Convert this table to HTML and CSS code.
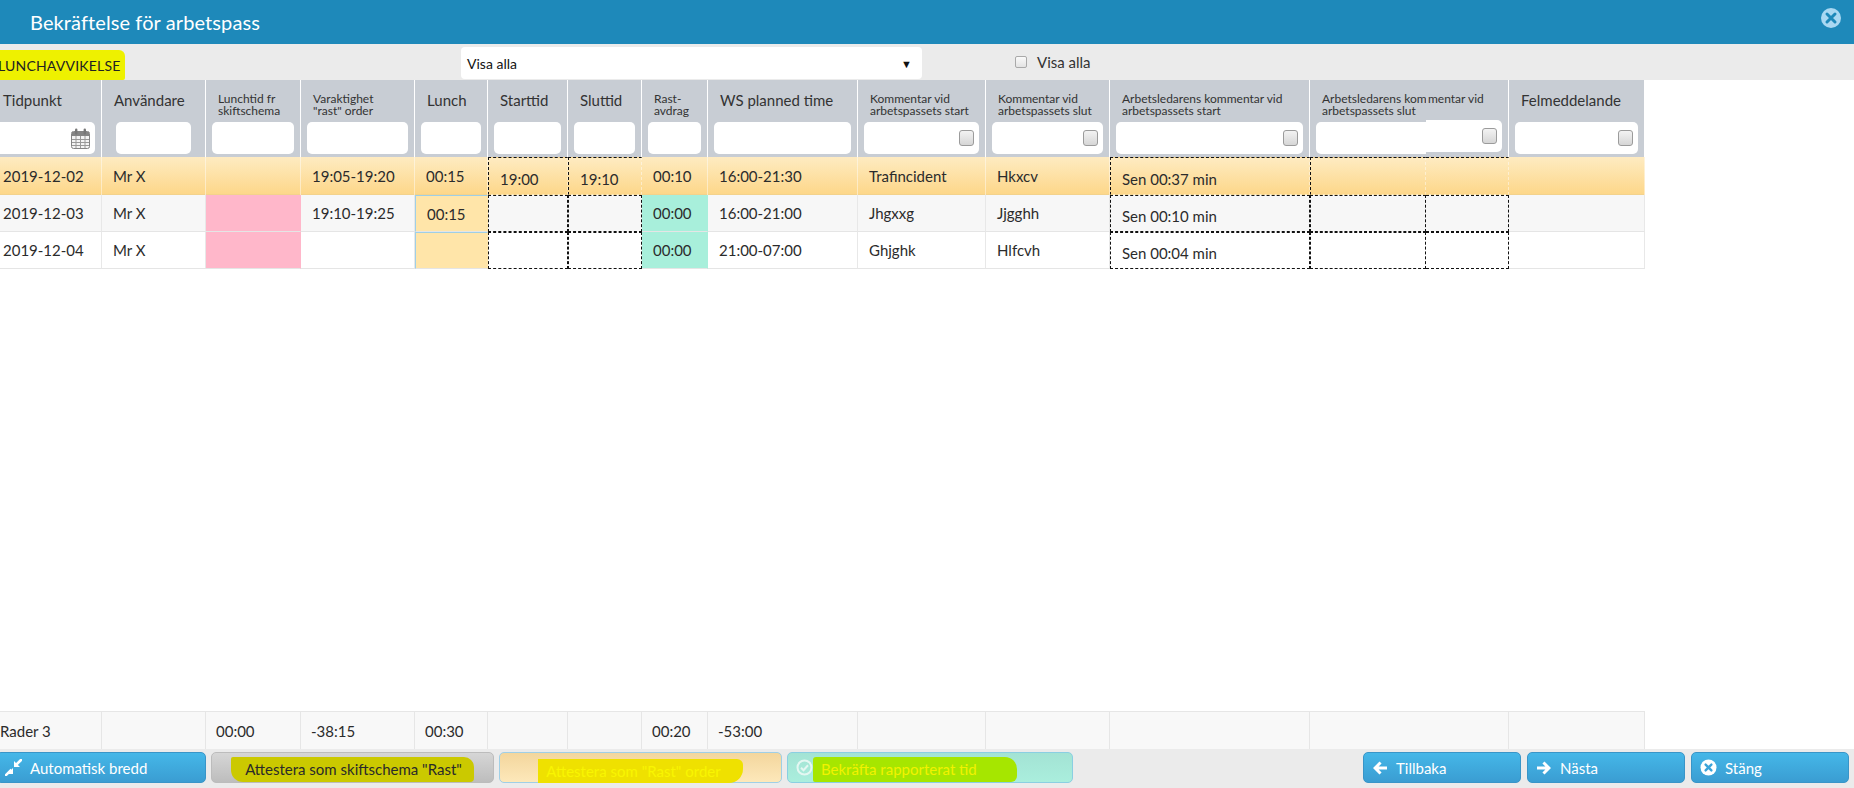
FILE: index.html
```html
<!DOCTYPE html>
<html lang="sv">
<head>
<meta charset="utf-8">
<title>Bekräftelse för arbetspass</title>
<link rel="stylesheet" href="styles.css">
</head>
<body>
<div class="app">
  <header class="titlebar">
    <h1 class="title">Bekräftelse för arbetspass</h1>
    <span class="close-x">
      <svg width="22" height="22" viewBox="0 0 22 22"><circle cx="11" cy="11" r="10" fill="#a9d8f2"/><path d="M7 7 L15 15 M15 7 L7 15" stroke="#1e89ba" stroke-width="3" stroke-linecap="round"/></svg>
    </span>
  </header>

  <div class="toolbar">
    <div class="tag-area"><span class="tag">LUNCHAVVIKELSE</span></div>
    <div class="select"><span>Visa alla</span><span class="caret">&#9660;</span></div>
    <label class="showall"><span class="cb-small"></span>Visa alla</label>
  </div>

  <main class="content">
    <table class="grid">
      <colgroup>
        <col class="c1"><col class="c2"><col class="c3"><col class="c4"><col class="c5"><col class="c6"><col class="c7"><col class="c8"><col class="c9"><col class="c10"><col class="c11"><col class="c12"><col class="c13"><col class="c14"><col class="c15">
      </colgroup>
      <thead>
        <tr>
          <th class="first"><div class="lbl">Tidpunkt</div><div class="flt date-flt"><svg width="19" height="21" viewBox="0 0 19 21"><rect x="0.5" y="3.5" width="18" height="17" rx="2" fill="#f4f4f4" stroke="#858585"/><rect x="1" y="4" width="17" height="4" fill="#858585"/><rect x="4" y="0.5" width="2.4" height="6" rx="1.2" fill="#777"/><rect x="12.6" y="0.5" width="2.4" height="6" rx="1.2" fill="#777"/><path d="M1 11.5 H18 M1 14.5 H18 M1 17.5 H18 M5 8 V20 M9.5 8 V20 M14 8 V20" stroke="#9a9a9a" stroke-width="1"/></svg></div></th>
          <th><div class="lbl">Användare</div><div class="flt flt-user"></div></th>
          <th><div class="lbl sm">Lunchtid fr<br>skiftschema</div><div class="flt"></div></th>
          <th><div class="lbl sm">Varaktighet<br>"rast" order</div><div class="flt"></div></th>
          <th><div class="lbl">Lunch</div><div class="flt"></div></th>
          <th><div class="lbl">Starttid</div><div class="flt"></div></th>
          <th><div class="lbl">Sluttid</div><div class="flt"></div></th>
          <th><div class="lbl sm">Rast-<br>avdrag</div><div class="flt"></div></th>
          <th><div class="lbl">WS planned time</div><div class="flt"></div></th>
          <th><div class="lbl sm">Kommentar vid<br>arbetspassets start</div><div class="flt"><span class="cb"></span></div></th>
          <th><div class="lbl sm">Kommentar vid<br>arbetspassets slut</div><div class="flt"><span class="cb"></span></div></th>
          <th><div class="lbl sm">Arbetsledarens kommentar vid<br>arbetspassets start</div><div class="flt"><span class="cb"></span></div></th>
          <th class="cut"><div class="lbl sm">Arbetsledarens kom<br>arbetspassets slut</div><div class="flt flt-cut"></div></th>
          <th class="tail"><div class="lbl sm lbl-tail">mentar vid</div><div class="flt flt-tail"><span class="cb"></span></div></th>
          <th><div class="lbl">Felmeddelande</div><div class="flt"><span class="cb"></span></div></th>
        </tr>
      </thead>
      <tbody>
        <tr class="sel">
          <td class="first">2019-12-02</td><td>Mr X</td><td></td><td>19:05-19:20</td><td>00:15</td>
          <td class="dash">19:00</td><td class="dash">19:10</td><td>00:10</td><td>16:00-21:30</td>
          <td>Trafincident</td><td>Hkxcv</td><td class="dash">Sen 00:37 min</td><td class="dash"></td><td class="dash tail"></td><td></td>
        </tr>
        <tr class="alt">
          <td class="first">2019-12-03</td><td>Mr X</td><td class="pink"></td><td>19:10-19:25</td><td class="peach">00:15</td>
          <td class="dash"></td><td class="dash"></td><td class="mint">00:00</td><td>16:00-21:00</td>
          <td>Jhgxxg</td><td>Jjgghh</td><td class="dash">Sen 00:10 min</td><td class="dash"></td><td class="dash tail"></td><td></td>
        </tr>
        <tr>
          <td class="first">2019-12-04</td><td>Mr X</td><td class="pink"></td><td></td><td class="peach"></td>
          <td class="dash"></td><td class="dash"></td><td class="mint">00:00</td><td>21:00-07:00</td>
          <td>Ghjghk</td><td>Hlfcvh</td><td class="dash">Sen 00:04 min</td><td class="dash"></td><td class="dash tail"></td><td></td>
        </tr>
      </tbody>
    </table>
  </main>

  <table class="grid summary">
    <colgroup>
      <col class="c1"><col class="c2"><col class="c3"><col class="c4"><col class="c5"><col class="c6"><col class="c7"><col class="c8"><col class="c9"><col class="c10"><col class="c11"><col class="c12"><col class="c13"><col class="c14"><col class="c15">
    </colgroup>
    <tbody>
      <tr>
        <td class="first">Rader 3</td><td></td><td>00:00</td><td>-38:15</td><td>00:30</td><td></td><td></td><td>00:20</td><td>-53:00</td><td></td><td></td><td></td><td colspan="2"></td><td></td>
      </tr>
    </tbody>
  </table>

  <footer class="footer">
    <div class="btn-group left">
      <button class="btn blue w-auto"><svg width="17" height="17" viewBox="0 0 17 17"><path d="M9 2 V8 H15 Z M8 9 V15 H2 Z" fill="#fff"/><path d="M11.5 5.5 L16 1 M5.5 11.5 L1 16" stroke="#fff" stroke-width="2.6" stroke-linecap="square"/></svg><span>Automatisk bredd</span></button>
      <button class="btn gray w-mid"><span class="hl hl-olive">Attestera som skiftschema "Rast"</span></button>
      <button class="btn peach w-mid"><span class="hl hl-yellow">Attestera som "Rast" order</span></button>
      <button class="btn teal w-conf"><svg width="17" height="17" viewBox="0 0 17 17"><circle cx="8.5" cy="8.5" r="7" fill="none" stroke="#e4f7f2" stroke-width="2"/><path d="M5 8.8 L7.5 11.2 L12 6.3" fill="none" stroke="#e4f7f2" stroke-width="2"/></svg><span class="hl hl-lime">Bekräfta rapporterat tid</span></button>
    </div>
    <div class="btn-group right">
      <button class="btn blue w-nav"><svg width="16" height="16" viewBox="0 0 16 16"><path d="M7.5 1.5 L1 8 L7.5 14.5 L9.6 12.4 L6.6 9.6 H15 V6.4 H6.6 L9.6 3.6 Z" fill="#fff"/></svg><span>Tillbaka</span></button>
      <button class="btn blue w-nav"><svg width="16" height="16" viewBox="0 0 16 16"><path d="M8.5 1.5 L15 8 L8.5 14.5 L6.4 12.4 L9.4 9.6 H1 V6.4 H9.4 L6.4 3.6 Z" fill="#fff"/></svg><span>Nästa</span></button>
      <button class="btn blue w-nav"><svg width="17" height="17" viewBox="0 0 17 17"><circle cx="8.5" cy="8.5" r="8" fill="#fff"/><path d="M5.6 5.6 L11.4 11.4 M11.4 5.6 L5.6 11.4" stroke="#3ba4d9" stroke-width="2.4" stroke-linecap="round"/></svg><span>Stäng</span></button>
    </div>
  </footer>
</div>
</body>
</html>
```

FILE: styles.css
```css
* { box-sizing: border-box; }

html, body {
  margin: 0;
  padding: 0;
  width: 1854px;
  height: 788px;
  overflow: hidden;
  background: #fff;
  font-family: Lato, "Open Sans", sans-serif;
  color: #2e2e2e;
}

.app {
  width: 1854px;
  height: 788px;
  display: flex;
  flex-direction: column;
}

/* ---------- title bar ---------- */
.titlebar {
  height: 44px;
  flex: none;
  background: #1e89ba;
  display: flex;
  align-items: center;
  justify-content: space-between;
  padding: 0 12px 0 30px;
}
.title {
  margin: 0;
  font-size: 20px;
  font-weight: normal;
  color: #fff;
  letter-spacing: 0.1px;
}
.close-x {
  display: flex;
  margin-top: -9px;
}

/* ---------- toolbar ---------- */
.toolbar {
  height: 36px;
  flex: none;
  background: #ebebeb;
  display: flex;
  align-items: center;
}
.tag-area {
  width: 461px;
  height: 100%;
  display: flex;
  align-items: stretch;
}
.tag {
  display: flex;
  align-items: center;
  margin-top: 6px;
  margin-left: -2px;
  padding: 0 5px 0 0;
  background: #eef100;
  border-radius: 0 6px 2px 0;
  font-size: 14px;
  color: #222;
  letter-spacing: 0.2px;
}
.select {
  width: 461px;
  height: 32px;
  margin-top: 2px;
  background: #fff;
  border-radius: 4px;
  display: flex;
  align-items: center;
  justify-content: space-between;
  padding: 0 10px 0 6px;
  font-size: 14px;
  color: #111;
}
.caret {
  font-size: 11px;
  color: #111;
}
.showall {
  margin-left: 93px;
  display: flex;
  align-items: center;
  gap: 10px;
  font-size: 15px;
  color: #333;
}
.cb-small {
  width: 12px;
  height: 12px;
  border: 1px solid #a9a9a9;
  border-radius: 2px;
  background: linear-gradient(#fafafa, #e3e3e3);
}

/* ---------- grid ---------- */
.content {
  flex: 1;
  overflow: hidden;
}
.grid {
  table-layout: fixed;
  width: 1645px;
  border-collapse: separate;
  border-spacing: 0;
}
.c1 { width: 102px; }
.c2 { width: 104px; }
.c3 { width: 95px; }
.c4 { width: 114px; }
.c5 { width: 73px; }
.c6 { width: 80px; }
.c7 { width: 74px; }
.c8 { width: 66px; }
.c9 { width: 150px; }
.c10 { width: 128px; }
.c11 { width: 124px; }
.c12 { width: 200px; }
.c13 { width: 116px; }
.c14 { width: 83px; }
.c15 { width: 136px; }

.grid th {
  background: #c8cdd4;
  padding: 0 0 3px 0;
  vertical-align: top;
  text-align: left;
  font-weight: normal;
  border-right: 1px solid #fff;
  overflow: hidden;
}
.lbl {
  height: 42px;
  padding: 10px 0 0 12px;
  font-size: 15px;
  line-height: 20px;
  color: #333;
  white-space: nowrap;
  overflow: hidden;
}
.lbl.sm {
  font-size: 12px;
  line-height: 11.5px;
  padding-top: 13px;
}
th.first .lbl { padding-left: 3px; }
.lbl-tail { padding-left: 2px; padding-top: 11px; }

.flt {
  height: 32px;
  margin: 0 6px;
  background: #fff;
  border-radius: 5px;
  display: flex;
  align-items: center;
  justify-content: flex-end;
  padding-right: 5px;
}
.date-flt {
  margin-left: -10px;
  padding-right: 5px;
}
.flt-user { margin: 0 14px 0 14px; }
.flt-cut {
  margin-right: 0;
  border-radius: 5px 0 0 5px;
}
.flt-tail {
  margin-left: 0;
  margin-top: -2px;
  border-radius: 0 5px 5px 0;
}
th.cut { border-right: none; }

.cb {
  width: 15px;
  height: 16px;
  border: 1px solid #9b9b9b;
  border-radius: 3px;
  background: linear-gradient(#f3f3f3, #d6d6d6);
}

.grid td {
  height: 37px;
  padding: 0 0 0 11px;
  font-size: 15px;
  color: #2b2b2b;
  white-space: nowrap;
  overflow: hidden;
  border-bottom: 1px solid #e5e5e5;
  border-right: 1px solid #e8e8e8;
  vertical-align: middle;
}
.grid td.first { padding-left: 3px; }

.grid tr.sel td {
  background: linear-gradient(#feebc1, #fdd78a);
  border-right-color: rgba(255, 255, 255, 0.45);
  border-bottom-color: #f3d28c;
  height: 38px;
}
.grid tr.alt td { background: #f7f7f7; }

.grid tr td.pink { background: #ffb7ca; border-right-color: #ffb7ca; }
.grid tr td.peach { background: #ffe5a9; border-right-color: #ffe5a9; }
.grid tr td.mint { background: #a8efdb; border-right-color: #a8efdb; }

.grid td.dash {
  border: 1px dashed #111;
  padding-top: 5px;
}
.grid td.dash.tail { border-left: none; }

/* ---------- summary ---------- */
.summary {
  flex: none;
}
.summary td {
  height: 38px;
  background: #f8f8f8;
  border-top: 1px solid #e6e6e6;
  border-bottom: none;
  border-right: 1px solid #e6e6e6;
  padding-left: 10px;
}
.summary td.first { padding-left: 0; }

/* ---------- footer ---------- */
.footer {
  height: 39px;
  flex: none;
  background: #ebebeb;
  display: flex;
  justify-content: space-between;
  padding: 3px 5px 0 0;
}
.btn-group {
  display: flex;
  height: 31px;
}
.btn-group.left { gap: 5px; margin-left: -4px; }
.btn-group.right { gap: 6px; }

.btn {
  height: 31px;
  border-radius: 5px;
  font-family: Lato, "Open Sans", sans-serif;
  font-size: 15px;
  display: flex;
  align-items: center;
  padding: 0 8px;
  gap: 8px;
  cursor: pointer;
}
.btn svg { flex: none; }
.blue {
  background: linear-gradient(#45b7e8, #3a9dd2);
  border: 1px solid #3995c8;
  color: #fff;
}
.gray {
  background: linear-gradient(#d6d6d6, #bdbdbd);
  border: 1px solid #bcbcbc;
  color: #2a2a2a;
  justify-content: center;
}
.peach {
  background: linear-gradient(#f3d69d, #fde8ba);
  border: 1px solid #9fcfe6;
  color: #f9f500;
  justify-content: center;
}
.teal {
  background: linear-gradient(#a3e3d4, #aaeedd);
  border: 1px solid #8acfe2;
  color: #f2f200;
}

.w-auto { width: 210px; padding-left: 8px; }
.w-mid { width: 283px; }
.w-conf { width: 286px; }
.w-nav { width: 158px; }

.hl {
  display: inline-flex;
  align-items: center;
  height: 25px;
  margin-top: 3px;
}
.hl-olive {
  background: #cbc900;
  padding: 0 12px 0 14px;
  border-radius: 2px 10px 4px 12px;
}
.hl-yellow {
  background: #efe100;
  padding: 0 22px 0 8px;
  border-radius: 0 6px 14px 0;
  height: 24px;
  margin-top: 6px;
}
.hl-lime {
  background: #a6e600;
  padding: 0 40px 0 8px;
  margin-left: -8px;
  border-radius: 3px 12px 6px 2px;
}
```
